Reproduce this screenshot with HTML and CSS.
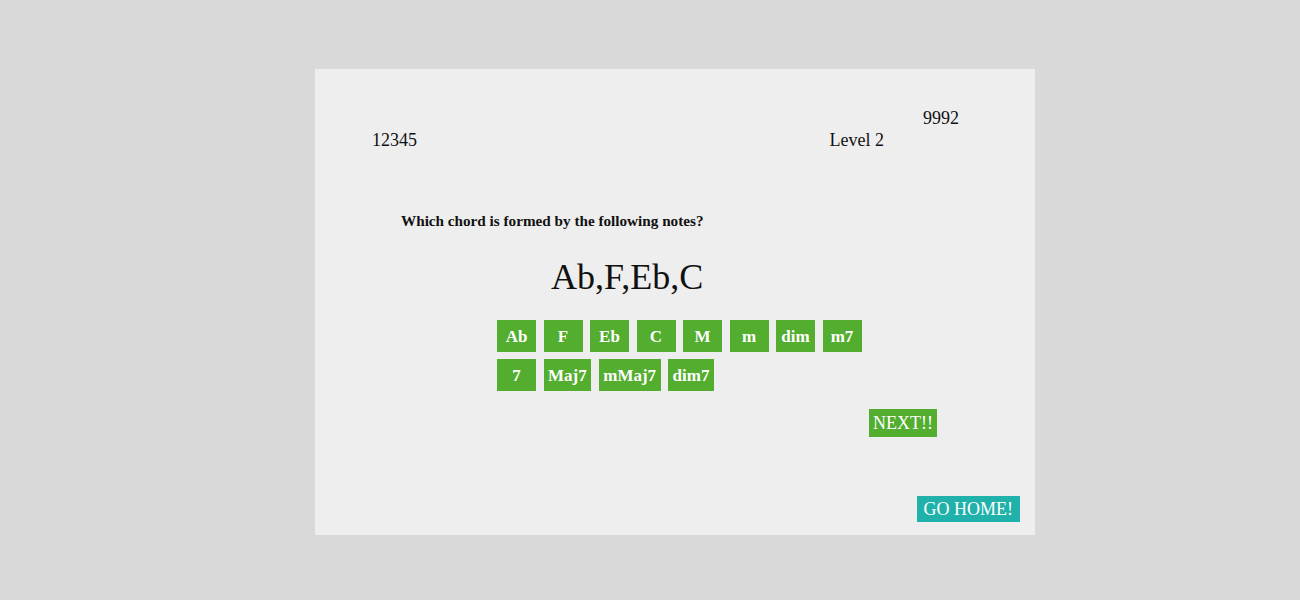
FILE: index.html
```html
<!DOCTYPE html>
<html>
<head>
<meta charset="utf-8">
<link rel="stylesheet" href="styles.css">
</head>
<body>
<div class="card">
  <div class="header">
    <div class="score">12345</div>
    <div class="spacer"></div>
    <div class="level">Level 2</div>
    <div class="best">9992</div>
  </div>
  <div class="question">Which chord is formed by the following notes?</div>
  <div class="notes">Ab,F,Eb,C</div>
  <div class="choices">
    <button class="choice">Ab</button>
    <button class="choice">F</button>
    <button class="choice">Eb</button>
    <button class="choice">C</button>
    <button class="choice">M</button>
    <button class="choice">m</button>
    <button class="choice">dim</button>
    <button class="choice">m7</button>
    <button class="choice">7</button>
    <button class="choice">Maj7</button>
    <button class="choice">mMaj7</button>
    <button class="choice">dim7</button>
  </div>
  <div class="next-row"><button class="next">NEXT!!</button></div>
  <div class="home-row"><button class="home">GO HOME!</button></div>
</div>
</body>
</html>
```
FILE: styles.css
```css
html, body {
  margin: 0;
  padding: 0;
}
body {
  background: #d9d9d9;
  font-family: "Liberation Serif", "Times New Roman", serif;
  color: #111;
  padding-top: 69px;
  height: 600px;
  box-sizing: border-box;
}
.card {
  margin-left: 315px;
  width: 720px;
  height: 466px;
  background: #eeeeee;
  box-sizing: border-box;
  padding: 39px 0 13px 0;
  display: flex;
  flex-direction: column;
}
.header {
  display: flex;
  align-items: flex-start;
  font-size: 18px;
  line-height: 21px;
  padding-left: 57px;
  padding-right: 76px;
}
.score, .level {
  margin-top: 22px;
}
.spacer {
  flex: 1;
}
.best {
  margin-left: 39px;
}
.question {
  margin-top: 61px;
  padding-left: 86px;
  font-size: 15.2px;
  font-weight: bold;
  line-height: 18px;
}
.notes {
  margin-top: 27px;
  padding-left: 236px;
  font-size: 36px;
  line-height: 40px;
}
.choices {
  margin-top: 23px;
  margin-left: 182px;
  width: 372px;
  display: flex;
  flex-wrap: wrap;
  column-gap: 7.5px;
  row-gap: 7px;
}
.choice {
  height: 32px;
  min-width: 39px;
  padding: 2px 4.5px 0 4.5px;
  box-sizing: border-box;
  border: none;
  margin: 0;
  background: #53ad2e;
  color: #fff;
  font-family: "Liberation Serif", "Times New Roman", serif;
  font-weight: bold;
  font-size: 17px;
  display: flex;
  align-items: center;
  justify-content: center;
}
.next-row {
  margin-top: 18px;
  padding-left: 554px;
  display: flex;
}
.next {
  height: 28px;
  padding: 0 4px;
  border: none;
  margin: 0;
  background: #53ad2e;
  color: #fff;
  font-family: "Liberation Serif", "Times New Roman", serif;
  font-size: 18px;
}
.home-row {
  margin-top: auto;
  display: flex;
  justify-content: flex-end;
  padding-right: 15px;
}
.home {
  height: 26px;
  padding: 0 7px;
  border: none;
  margin: 0;
  background: #20b2aa;
  color: #fff;
  font-family: "Liberation Serif", "Times New Roman", serif;
  font-size: 18px;
}
```
